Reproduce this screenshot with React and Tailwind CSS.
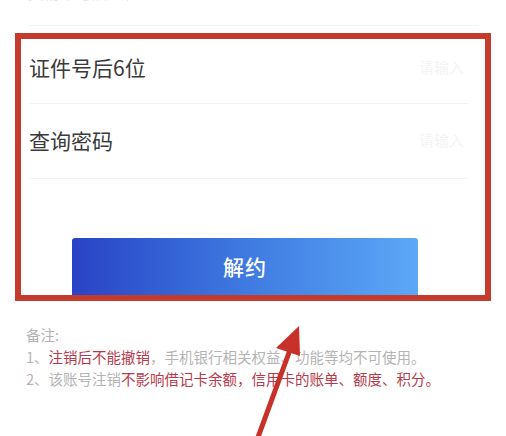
const FONT = { fontFamily: '"Noto Sans CJK SC", "Noto Sans", sans-serif' }

function FieldRow({ label, height, top, hint }) {
  return (
    <div
      className="flex justify-between border-b border-[#f2f2f2]"
      style={{ height, paddingTop: top }}
    >
      <span className="text-[21px] text-[#3a3a3a] leading-[24px]">{label}</span>
      <span className="text-[15px] leading-[24px] text-[#f4f4f4] pr-1">{hint}</span>
    </div>
  )
}

function Arrow() {
  return (
    <svg
      className="absolute left-0 top-0 pointer-events-none"
      width="506"
      height="436"
      viewBox="0 0 506 436"
    >
      <line x1="257" y1="440" x2="290" y2="350" stroke="#c8302a" strokeWidth="5" strokeLinecap="round" />
      <polygon points="299,326 276,348 300,356" fill="#c8302a" />
    </svg>
  )
}

export default function App() {
  return (
    <div className="relative w-[506px] h-[436px] overflow-hidden bg-white" style={FONT}>
      {/* cut-off row above */}
      <div className="h-[26px] overflow-hidden border-b border-[#f4f4f4] mx-[28px]">
        <div className="-mt-[19px] text-[16px] leading-[22px] text-[#e4e4e4]">交易卡号后四位</div>
      </div>

      {/* highlighted form */}
      <div className="mt-[7px] mx-[15px] h-[268px] border-[6px] border-[#c43b2e] flex flex-col">
        <div className="pl-[8px] pr-[17px]">
          <FieldRow label="证件号后6位" height={65} top={16} hint="请输入" />
          <FieldRow label="查询密码" height={75} top={24} hint="请输入" />
        </div>
        <div className="mt-auto ml-[51px] w-[346px] h-[57px] rounded-t-[3px] bg-gradient-to-r from-[#2a42c6] via-[#3f7ae0] to-[#5ca8f7] flex items-center justify-center">
          <span className="text-white text-[21px] font-medium tracking-[1px]">解约</span>
        </div>
      </div>

      {/* notes */}
      <div className="pl-[26px] pt-[23px] text-[14.5px] leading-[22px] text-[#b4b4b4]">
        <div>备注:</div>
        <div>
          1、<span className="text-[#b8394c]">注销后不能撤销</span>，手机银行相关权益、功能等均不可使用。
        </div>
        <div>
          2、该账号注销<span className="text-[#b8394c]">不影响借记卡余额，信用卡的账单、额度、积分。</span>
        </div>
      </div>

      <Arrow />
    </div>
  )
}
